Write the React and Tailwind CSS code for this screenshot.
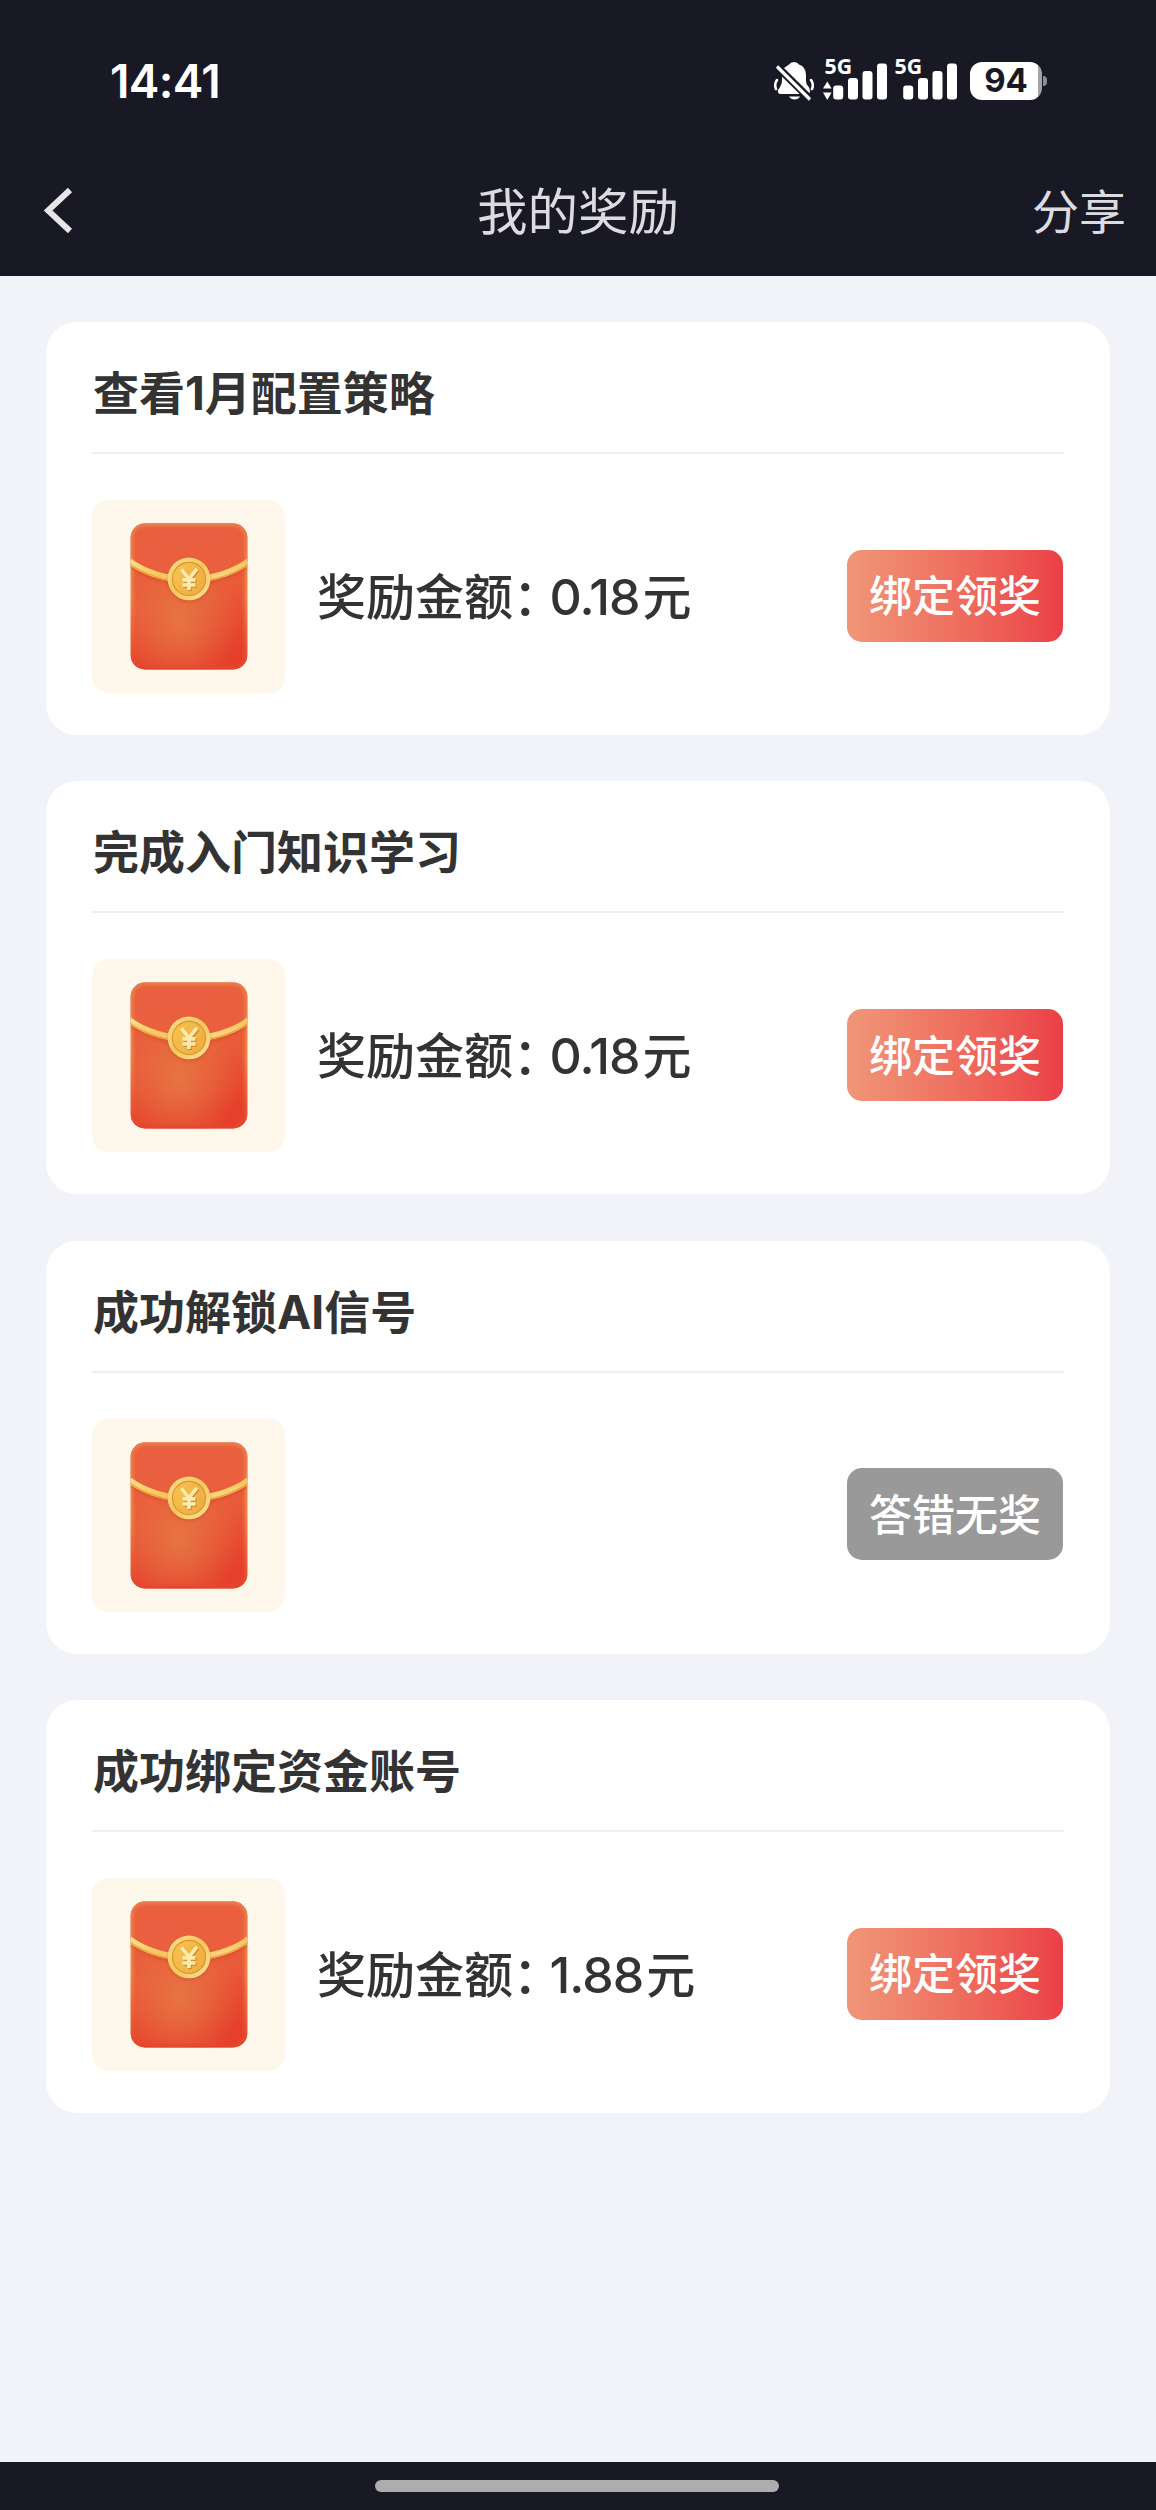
import React from 'react';

const rewards = [
  { id: 1, title: '查看1月配置策略', amount: '0.18', claimable: true },
  { id: 2, title: '完成入门知识学习', amount: '0.18', claimable: true },
  { id: 3, title: '成功解锁AI信号', amount: null, claimable: false },
  { id: 4, title: '成功绑定资金账号', amount: '1.88', claimable: true }
];

const SignalBars = ({ arrows }) => (
  <svg className="h-11 w-[66px] overflow-visible" viewBox="0 0 66 44" fill="#fff">
    <text
      x="1.5"
      y="15"
      fontFamily="Open Sans, sans-serif"
      fontSize="22"
      fontWeight="700"
      textLength="27.5"
      lengthAdjust="spacingAndGlyphs"
    >
      5G
    </text>
    {arrows && <path d="M0 29.500 4.300 22.500 8.600 29.500ZM0 33.500H8.600L4.300 41Z" />}
    <rect x="10.200" y="26.500" width="10" height="14" rx="3" />
    <rect x="25" y="19" width="10" height="21.500" rx="3" />
    <rect x="39.500" y="12" width="10" height="28.500" rx="3" />
    <rect x="54" y="4.500" width="10" height="36" rx="3" />
  </svg>
);

const MutedBell = () => (
  <svg className="h-10 w-10" viewBox="0 0 40 40" fill="none">
    <path
      fill="#fff"
      d="M15 3.500Q16.500 1 20 1Q23.500 1 25 3.500Q32 6 32 14V20Q32 23 34 25Q36 27 36 30Q36 33 33 33H7Q3 33 4 29Q8 24 8 19V13Q8 10 10 7Z"
    />
    <path d="M15 35.500H26Q24.500 38.500 20.500 38.500 17 38.500 15 35.500Z" fill="#fff" />
    <path d="M3 19Q0 23 2 28M37 19Q40 23 38 28" stroke="#fff" strokeWidth="2.600" strokeLinecap="round" />
    <path d="M2 4.500 36.500 38.500" stroke="#181924" strokeWidth="7.500" />
    <path d="M3 5.500 36 38.500" stroke="#fff" strokeWidth="3.200" />
  </svg>
);

const RedPacket = () => (
  <svg className="h-full w-full" viewBox="0 0 192 192">
    <defs>
      <linearGradient id="body" x1="0" y1="0" x2="0.2" y2="1">
        <stop offset="0" stopColor="#e9603f" />
        <stop offset="0.6" stopColor="#e95a38" />
        <stop offset="1" stopColor="#e5402b" />
      </linearGradient>
      <radialGradient id="glow" cx="0.42" cy="0.66" r="0.5">
        <stop offset="0" stopColor="#e77443" />
        <stop offset="1" stopColor="#e77443" stopOpacity="0" />
      </radialGradient>
      <linearGradient id="edge" x1="0" y1="0" x2="0" y2="1">
        <stop offset="0" stopColor="#e8804c" />
        <stop offset="0.5" stopColor="#f08a49" />
        <stop offset="1" stopColor="#e5442d" />
      </linearGradient>
      <linearGradient id="gold" x1="0" y1="0" x2="1" y2="1">
        <stop offset="0" stopColor="#fbe08d" />
        <stop offset="0.5" stopColor="#f6c75c" />
        <stop offset="1" stopColor="#fbe39a" />
      </linearGradient>
      <linearGradient id="coin" x1="0" y1="0" x2="1" y2="0.6">
        <stop offset="0" stopColor="#f7c450" />
        <stop offset="1" stopColor="#efae42" />
      </linearGradient>
      <filter id="soft" x="-10%" y="-10%" width="120%" height="120%">
        <feGaussianBlur stdDeviation="1.6" />
      </filter>
      <clipPath id="packet">
        <rect x="38.500" y="23.500" width="116" height="145" rx="14" />
      </clipPath>
    </defs>
    <g clipPath="url(#packet)">
      <rect x="38" y="23" width="117" height="146" fill="url(#body)" />
      <rect x="38" y="23" width="117" height="146" fill="url(#glow)" />
      <path d="M37 23H156V60Q135 78 96 79.500 57 78 37 60Z" fill="#ea6040" opacity="0.75" />
      <rect x="38.500" y="23.500" width="116" height="145" rx="14" fill="none" stroke="url(#edge)" strokeWidth="5" filter="url(#soft)" />
      <path d="M37 65Q62 83 96 84 131 83 156 65" stroke="#cf4a24" strokeWidth="3" fill="none" opacity="0.45" filter="url(#soft)" />
      <path d="M37 61Q61 78 96 79.500 132 78 156 61" stroke="url(#gold)" strokeWidth="6.500" fill="none" />
      <path d="M37 63.500Q61 80.500 96 82 132 80.500 156 63.500" stroke="#eda445" strokeWidth="1.300" fill="none" />
    </g>
    <circle cx="96.500" cy="80" r="21" fill="#b8451f" opacity="0.5" filter="url(#soft)" />
    <circle cx="96.500" cy="78.500" r="21.300" fill="url(#gold)" />
    <circle cx="96.500" cy="78.500" r="16.500" fill="url(#coin)" stroke="#dc9432" strokeWidth="1.200" />
    <g fill="none" strokeWidth="3.600">
      <path d="M90 70 97.500 79.500 105.500 69.500M97.500 79V90.500M91 80.500H104M91 85.500H104" stroke="#cf8428" />
      <path d="M89 69 96.500 78.500 104.500 68.500M96.500 78V89.500M90 79.500H103M90 84.500H103" stroke="#fdebae" />
    </g>
  </svg>
);

const StatusBar = () => (
  <div className="flex h-[162px] items-center justify-between pr-[109px] pl-[110px] text-white">
    <span className="pt-px font-['Inter',sans-serif] text-[46px] font-semibold tracking-[-0.7px]">14:41</span>
    <div className="flex items-center">
      <MutedBell />
      <div className="ml-[9px] flex gap-1">
        <SignalBars arrows />
        <SignalBars />
      </div>
      <div className="ml-[11px] flex h-[38px] w-[72px] items-center justify-center rounded-[12px] bg-gradient-to-r from-white from-94% to-[#a3a3a8] to-94% font-['Inter',sans-serif] text-[33px] font-bold text-[#181924]">
        94
      </div>
      <div className="ml-px h-[10px] w-1 rounded-r-full bg-[#8d8d94]" />
    </div>
  </div>
);

const NavBar = () => (
  <div className="grid h-[114px] grid-cols-3 items-center px-[30px] pb-[18px] text-[47px] text-[#dcdce0]">
    <svg className="ml-[14px] h-[48px] w-[30px]" viewBox="0 0 30 48" fill="none">
      <path d="M26 4 4 24.500 26 45" stroke="#e6e6e8" strokeWidth="6" />
    </svg>
    <h1 className="pb-[3px] text-center text-[50.500px]">我的奖励</h1>
    <span className="pb-[2px] text-right">分享</span>
  </div>
);

// Inter sets the digits and Latin letters, the CJK face sets the rest
const RewardCard = ({ reward }) => (
  <article className="h-[413px] rounded-[31px] bg-white px-[46px]">
    <h2 className="flex h-[132px] items-center border-b-2 border-[#eeeeee] pt-[13px] pl-px font-['Inter','Noto_Sans_CJK_SC',sans-serif] text-[46px] font-bold">
      {reward.title}
    </h2>
    <div className="mt-[46px] flex items-center">
      <div className="h-[193px] w-[193px] rounded-[16px] bg-[#fef7ec]">
        <RedPacket />
      </div>
      {reward.amount && (
        <p className="ml-[32px] flex items-baseline pb-[2px] text-[49px] font-medium">
          奖励金额
          <span className="mr-[12px] [font-feature-settings:'halt']">：</span>
          <span className="mr-[3px] font-['Inter',sans-serif] text-[50px] tracking-[-1px]">
            {reward.amount}
          </span>
          元
        </p>
      )}
      {reward.claimable ? (
        <button className="mr-px mb-[2px] ml-auto h-[92px] w-[216px] rounded-[15px] bg-gradient-to-r from-[#ef9678] to-[#eb3e47] pb-[4px] text-[43px] font-medium text-white">
          绑定领奖
        </button>
      ) : (
        <button className="mr-px mb-[2px] ml-auto h-[92px] w-[216px] rounded-[15px] bg-[#999999] pb-[4px] text-[43px] font-medium text-white">
          答错无奖
        </button>
      )}
    </div>
  </article>
);

const App = () => (
  <div className="flex h-[2510px] w-[1156px] flex-col bg-[#f2f3f8] font-['Noto_Sans_CJK_SC',sans-serif] text-[#333333]">
    <header className="bg-[#181924]">
      <StatusBar />
      <NavBar />
    </header>
    <main className="flex flex-1 flex-col gap-[46.400px] px-[46px] pt-[46px]">
      {rewards.map((r) => (
        <RewardCard key={r.id} reward={r} />
      ))}
    </main>
    <footer className="flex h-[48px] items-center justify-center pr-[2px] bg-[#181924]">
      <div className="h-3 w-[404px] rounded-full bg-[#adadaf]" />
    </footer>
  </div>
);

export default App;
